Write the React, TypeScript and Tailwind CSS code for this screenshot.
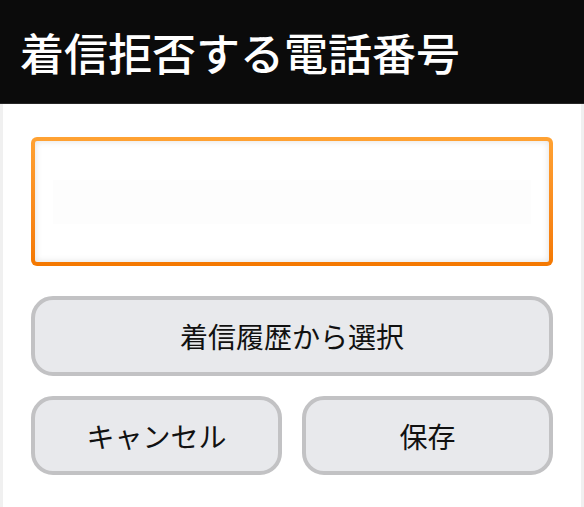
import React from 'react';

const font = { fontFamily: '"Noto Sans CJK JP", "Noto Sans", sans-serif' };

export default function App() {
  return (
    <div className="w-[584px] h-[507px] bg-white flex flex-col overflow-hidden" style={font}>
      {/* Header */}
      <div className="h-[104px] bg-[#0b0b0b] border-b border-[#262626] flex items-center pl-[20px] shrink-0">
        <h1 className="text-[44px] leading-none font-medium text-white">着信拒否する電話番号</h1>
      </div>

      {/* Body */}
      <div className="flex-1 border-l-[3px] border-r-[3px] border-[#f0f0f0] pl-[28px] pr-[28px] pt-[33px] flex flex-col">
        {/* Input */}
        <div className="h-[129px] shrink-0 rounded-[6px] p-[4px] bg-gradient-to-b from-[#ffa233] to-[#f47800]">
          <div className="h-full bg-white rounded-[2px] shadow-[inset_0_0_7px_rgba(0,0,0,0.13)] px-[18px] flex items-center">
            <div className="w-full h-[44px] bg-[#fdfdfd]" />
          </div>
        </div>

        <button className="mt-[30px] h-[80px] shrink-0 rounded-[22px] border-[4px] border-[#c2c2c4] bg-[#e8e9ec] text-[28px] leading-none text-[#111] flex items-center justify-center">
          着信履歴から選択
        </button>

        <div className="mt-[20px] flex gap-[20px]">
          <button className="flex-1 h-[79px] rounded-[22px] border-[4px] border-[#c2c2c4] bg-[#e8e9ec] text-[28px] leading-none text-[#111] flex items-center justify-center">
            キャンセル
          </button>
          <button className="flex-1 h-[79px] rounded-[22px] border-[4px] border-[#c2c2c4] bg-[#e8e9ec] text-[28px] leading-none text-[#111] flex items-center justify-center">
            保存
          </button>
        </div>
      </div>
    </div>
  );
}
